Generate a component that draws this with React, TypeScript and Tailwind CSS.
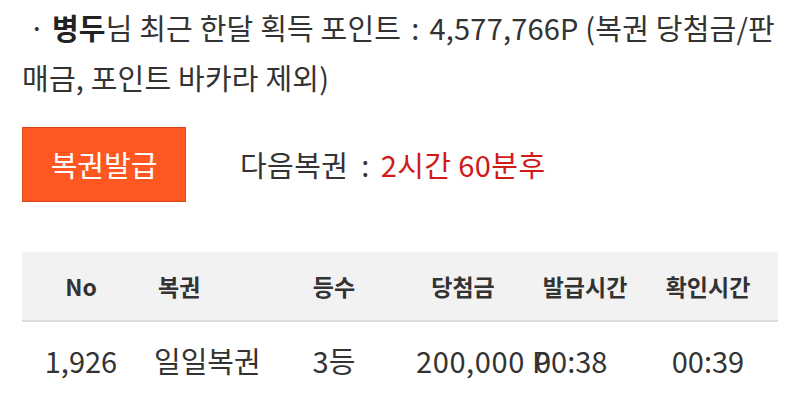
// Point summary + lottery issue box + recent ticket table
const font = { fontFamily: '"Noto Sans CJK KR", "Noto Sans", sans-serif' }

const rows = [
  { no: '1,926', name: '일일복권', rank: '3등', prize: '200,000 P', issued: '00:38', checked: '00:39' },
]

export default function App() {
  return (
    <div className="w-[800px] h-[402px] overflow-hidden bg-white text-[#333]" style={font}>
      <p className="pl-[22px] pr-2 pt-[2px] text-[29px] leading-[50px] tracking-[0.2px]">
        &nbsp;· <b className="font-bold text-[#222]">병두</b>님 최근 한달 획득 포인트<span className="px-[10px]">:</span>4,577,766P (복권 당첨금/판매금, 포인트 바카라 제외)
      </p>

      <div className="mt-[25px] flex items-center pl-[22px]">
        <button
          type="button"
          className="h-[75px] w-[164px] border border-[#d9481c] bg-[#ff5722] text-[29px] text-white"
        >
          복권발급
        </button>
        <div className="ml-[54px] text-[29px] tracking-[0.4px]">
          다음복권<span className="ml-[13px] mr-[11px]">:</span>
          <span className="text-[#d01a1a]">2시간 60분후</span>
        </div>
      </div>

      <div className="mx-[22px] mt-[50px]">
        <div className="grid h-[70px] grid-cols-[118px_134px_120px_138px_106px_140px] items-center border-b-2 border-[#dcdcdc] bg-[#f2f2f2] text-[23px] font-bold text-[#333]">
          <div className="text-center">No</div>
          <div className="pl-[18px]">복권</div>
          <div className="text-center">등수</div>
          <div className="text-center">당첨금</div>
          <div className="text-center">발급시간</div>
          <div className="text-center">확인시간</div>
        </div>
        {rows.map((r) => (
          <div
            key={r.no}
            className="grid h-[78px] grid-cols-[118px_134px_120px_138px_106px_140px] items-center text-[29px] whitespace-nowrap"
          >
            <div className="text-center">{r.no}</div>
            <div className="pl-[14px]">{r.name}</div>
            <div className="text-center">{r.rank}</div>
            <div className="pl-[22px] tracking-[0.6px]">{r.prize}</div>
            <div className="pl-[3px]">{r.issued}</div>
            <div className="text-center">{r.checked}</div>
          </div>
        ))}
      </div>
    </div>
  )
}
